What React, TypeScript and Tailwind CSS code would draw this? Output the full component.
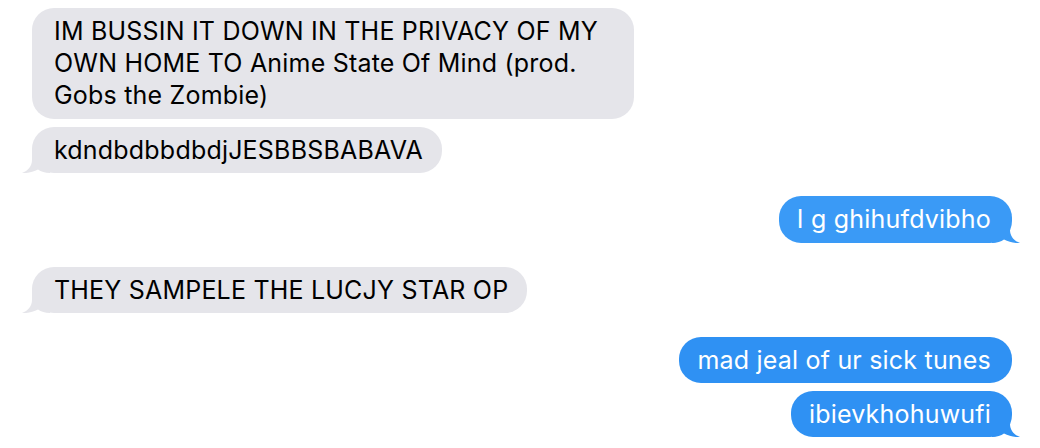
import React from "react";

function Tail({ me, color }: { me: boolean; color: string }) {
  return (
    <svg
      width="30"
      height="24"
      viewBox="0 0 30 24"
      className={
        me
          ? "absolute bottom-0 right-[-9px] -scale-x-100"
          : "absolute bottom-0 left-[-11px]"
      }
      style={{ color }}
    >
      <path
        d="M11 1 L11 11 C11 17 7 22 1 24 C6 24.5 12 23 17 20.5 C20 22.5 24 24 29 24 L29 1 Z"
        fill="currentColor"
      />
    </svg>
  );
}

function Bubble({
  children,
  me = false,
  tail = false,
  color,
  className = "",
}: {
  children: React.ReactNode;
  me?: boolean;
  tail?: boolean;
  color?: string;
  className?: string;
}) {
  const bg = me ? color ?? "#3A9AF6" : "#E5E5EA";
  return (
    <div
      className={
        "relative w-fit max-w-[602px] rounded-[22px] pt-[7px] text-[25px] leading-[32px] tracking-[0.2px] " +
        (me
          ? "self-end pl-[18px] pr-[21px] text-white "
          : "self-start pl-[22px] pr-[19px] text-black ") +
        className
      }
      style={{ backgroundColor: bg }}
    >
      {tail && <Tail me={me} color={bg} />}
      <span className="relative">{children}</span>
    </div>
  );
}

export default function App() {
  return (
    <div
      className="flex h-[448px] w-[1040px] flex-col overflow-hidden bg-white pl-[32px] pr-[28px] pt-[8px]"
      style={{ fontFamily: "Inter, 'Noto Sans', sans-serif" }}
    >
      <Bubble className="pb-[8px]">
        IM BUSSIN IT DOWN IN THE PRIVACY OF MY OWN HOME TO Anime State Of Mind (prod. Gobs the Zombie)
      </Bubble>
      <Bubble tail className="mt-[8px] pb-[7px]">
        kdndbdbbdbdjJESBBSBABAVA
      </Bubble>
      <Bubble me tail color="#3A9AF6" className="mt-[23px] pb-[8px]">
        I g ghihufdvibho
      </Bubble>
      <Bubble tail className="mt-[24px] pb-[7px]">
        THEY SAMPELE THE LUCJY STAR OP
      </Bubble>
      <Bubble me color="#2F91F3" className="mt-[24px] pb-[7px]">
        mad jeal of ur sick tunes
      </Bubble>
      <Bubble me tail color="#2F91F3" className="mt-[8px] pb-[7px]">
        ibievkhohuwufi
      </Bubble>
    </div>
  );
}
